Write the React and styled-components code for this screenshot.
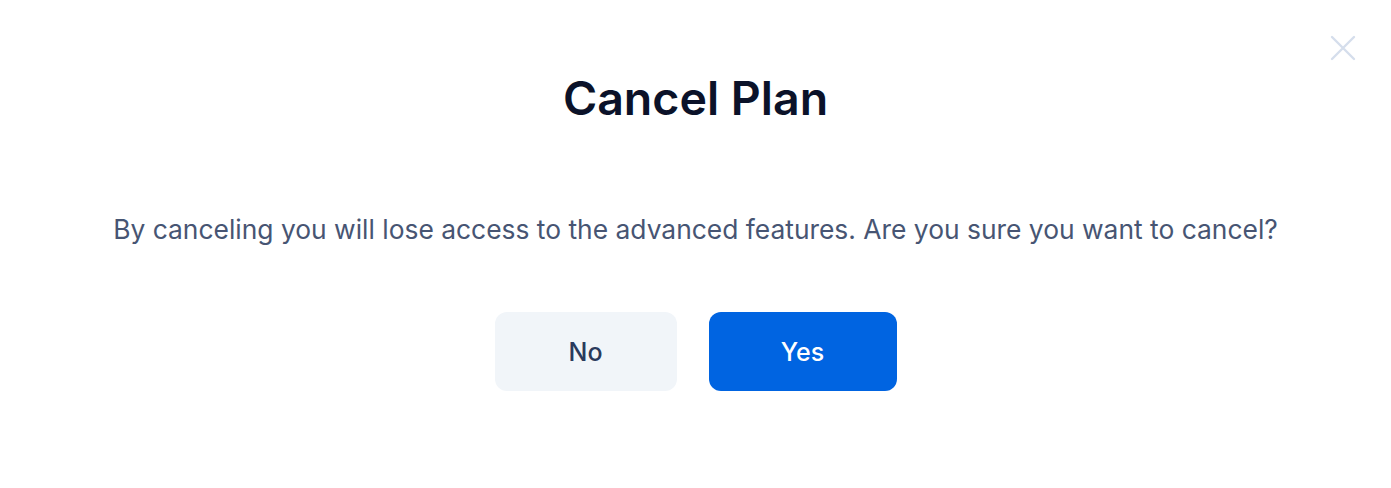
import React from "react";
import styled, { createGlobalStyle } from "styled-components";

const Global = createGlobalStyle`
  html, body { margin: 0; padding: 0; background: #ffffff; }
  body { font-family: Inter, "Noto Sans", sans-serif; }
  * { box-sizing: border-box; }
`;

const Dialog = styled.div`
  position: relative;
  width: 1391px;
  height: 488px;
  background: #ffffff;
  display: flex;
  flex-direction: column;
  align-items: center;
  padding-top: 68px;
`;

const CloseButton = styled.button`
  position: absolute;
  top: 33px;
  right: 33px;
  width: 30px;
  height: 30px;
  padding: 0;
  border: none;
  background: transparent;
  display: flex;
  align-items: center;
  justify-content: center;
  cursor: pointer;
`;

const Title = styled.h2`
  margin: 0;
  font-size: 46.5px;
  line-height: 60px;
  font-weight: 600;
  color: #0b1229;
  letter-spacing: 0;
`;

const Message = styled.p`
  margin: 83px 0 0;
  font-size: 26.4px;
  line-height: 36px;
  font-weight: 400;
  color: #475573;
`;

const Actions = styled.div`
  display: flex;
  gap: 32px;
  margin-top: 65px;
`;

const Button = styled.button`
  height: 79px;
  width: ${(p) => p.$w}px;
  border: none;
  border-radius: 12px;
  font-family: inherit;
  font-size: 25px;
  font-weight: 500;
  cursor: pointer;
  background: ${(p) => (p.$primary ? "#0064e1" : "#f1f5f9")};
  color: ${(p) => (p.$primary ? "#ffffff" : "#2a3a5c")};
`;

export default function App() {
  return (
    <>
      <Global />
      <Dialog>
        <CloseButton aria-label="Close">
          <svg width="26" height="26" viewBox="0 0 26 26" fill="none">
            <path d="M2 2L24 24M24 2L2 24" stroke="#d5deec" strokeWidth="2.4" strokeLinecap="round" />
          </svg>
        </CloseButton>
        <Title>Cancel Plan</Title>
        <Message>
          By canceling you will lose access to the advanced features. Are you sure you want to cancel?
        </Message>
        <Actions>
          <Button $w={182}>No</Button>
          <Button $w={188} $primary>Yes</Button>
        </Actions>
      </Dialog>
    </>
  );
}
